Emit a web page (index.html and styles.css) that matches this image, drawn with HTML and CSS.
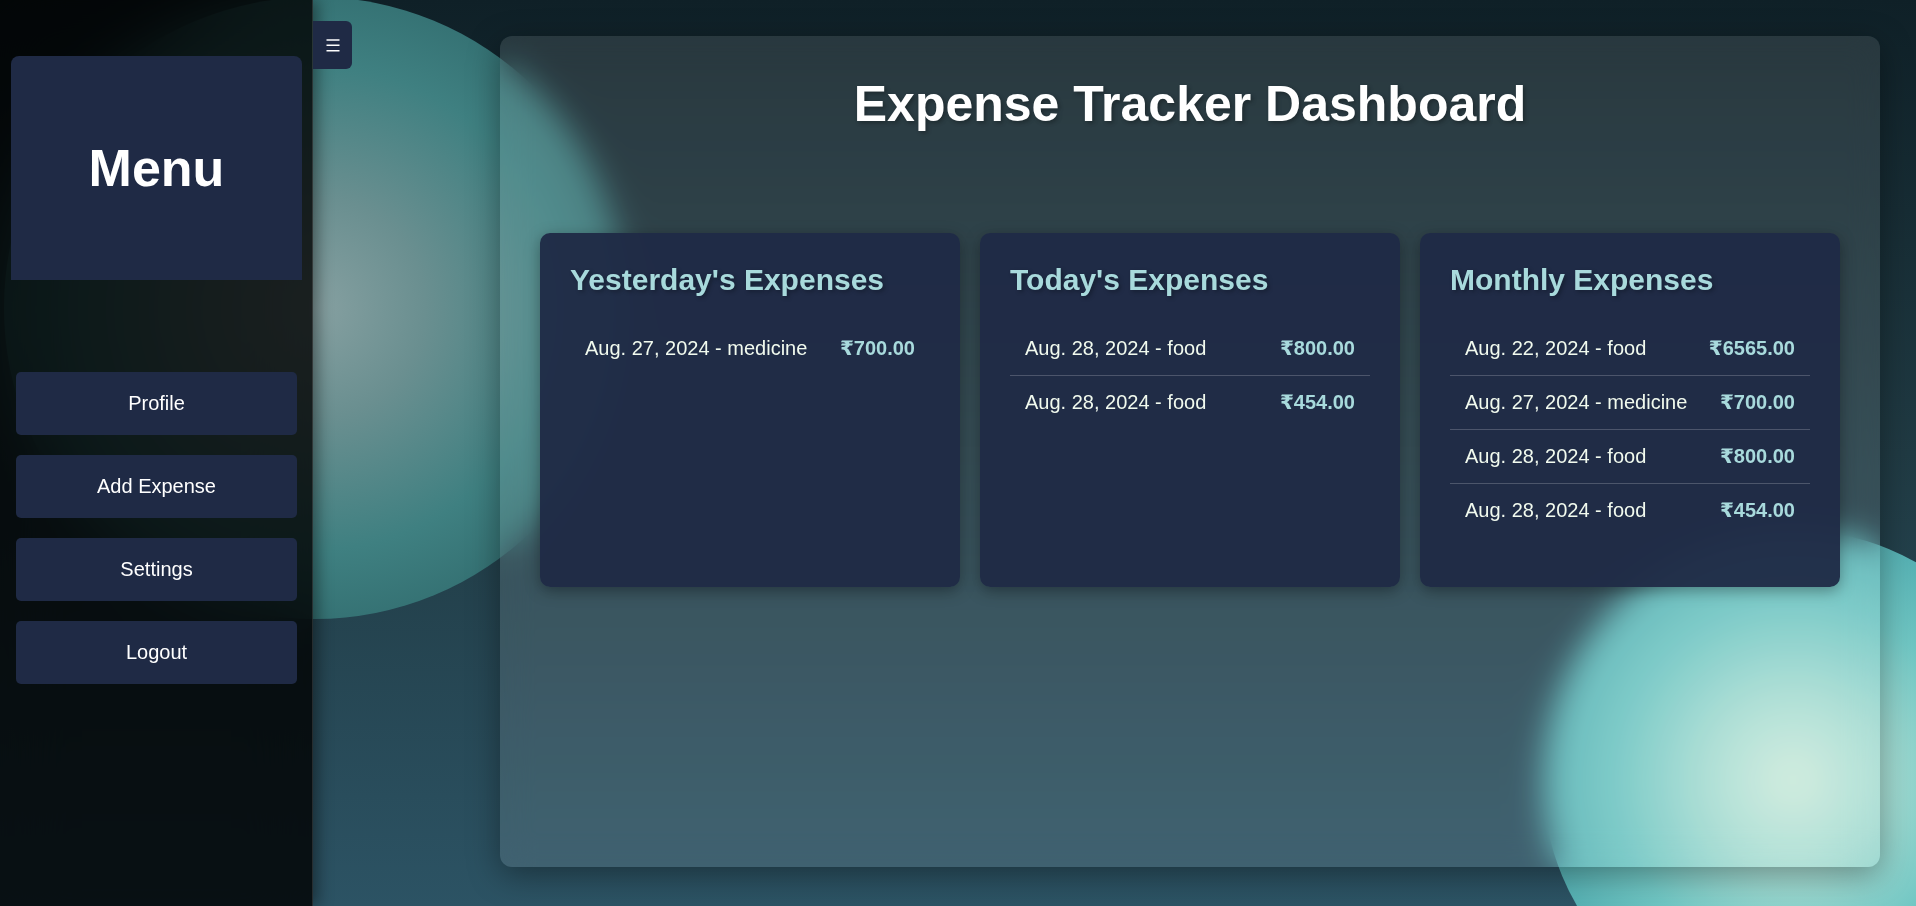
FILE: index.html
```html
<!DOCTYPE html>
<html lang="en">
<head>
<meta charset="utf-8">
<title>Expense Tracker Dashboard</title>
<link rel="stylesheet" href="styles.css">
</head>
<body>
<div class="backdrop">
  <div class="bg-circle circle-one"></div>
  <div class="bg-circle circle-two"></div>
</div>
<div class="layout">
  <aside class="sidebar">
    <div class="sidebar-header"><h2>Menu</h2></div>
    <nav class="sidebar-nav">
      <a class="nav-btn" href="#">Profile</a>
      <a class="nav-btn" href="#">Add Expense</a>
      <a class="nav-btn" href="#">Settings</a>
      <a class="nav-btn" href="#">Logout</a>
    </nav>
    <button class="toggle-btn" type="button" aria-label="Toggle menu">
      <svg width="14" height="14" viewBox="0 0 14 14" aria-hidden="true">
        <path d="M0.5 2H13.5M0.5 7.3H13.5M0.5 12.8H13.5" stroke="#ffffff" stroke-width="1.4" fill="none"/>
      </svg>
    </button>
  </aside>
  <main class="main">
    <section class="panel">
      <h1 class="title">Expense Tracker Dashboard</h1>
      <div class="cards">
        <div class="card">
          <h3>Yesterday's Expenses</h3>
          <ul class="expense-list">
            <li><span>Aug. 27, 2024 - medicine</span><span class="amount">₹700.00</span></li>
          </ul>
        </div>
        <div class="card">
          <h3>Today's Expenses</h3>
          <ul class="expense-list">
            <li><span>Aug. 28, 2024 - food</span><span class="amount">₹800.00</span></li>
            <li><span>Aug. 28, 2024 - food</span><span class="amount">₹454.00</span></li>
          </ul>
        </div>
        <div class="card">
          <h3>Monthly Expenses</h3>
          <ul class="expense-list">
            <li><span>Aug. 22, 2024 - food</span><span class="amount">₹6565.00</span></li>
            <li><span>Aug. 27, 2024 - medicine</span><span class="amount">₹700.00</span></li>
            <li><span>Aug. 28, 2024 - food</span><span class="amount">₹800.00</span></li>
            <li><span>Aug. 28, 2024 - food</span><span class="amount">₹454.00</span></li>
          </ul>
        </div>
      </div>
    </section>
  </main>
</div>
</body>
</html>
```

FILE: styles.css
```css
html, body {
  margin: 0;
  height: 100%;
}

body {
  position: relative;
  overflow: hidden;
  font-family: "Liberation Sans", Arial, "DejaVu Sans", sans-serif;
  color: #ffffff;
  background: linear-gradient(to bottom, #0f2027 0%, #203a43 50%, #2c5364 100%);
}

.backdrop {
  position: fixed;
  inset: 0;
  overflow: hidden;
  z-index: 0;
}

.bg-circle {
  position: absolute;
  border-radius: 50%;
}

.circle-one {
  left: 4px;
  top: -3px;
  width: 622px;
  height: 622px;
  background: radial-gradient(circle, #86a0a1 0%, #6a8f90 25%, #3f8081 55%, #336f71 75%, #2a5a5d 100%);
}

.circle-two {
  left: 1543px;
  top: 530px;
  width: 500px;
  height: 500px;
  background: radial-gradient(circle, #d0ecdd 0%, #a6dcd2 25%, #70c6c3 50%, #4eaaae 78%, #3b8189 100%);
}

.layout {
  position: relative;
  z-index: 1;
  display: flex;
  height: 100vh;
}

.sidebar {
  position: relative;
  flex: none;
  width: 313px;
  box-sizing: border-box;
  padding-top: 56px;
  background: rgba(0, 0, 0, 0.8);
  -webkit-backdrop-filter: blur(30px);
  backdrop-filter: blur(30px);
  border-right: 1px solid rgba(255, 255, 255, 0.12);
  box-shadow: 4px 0 15px rgba(0, 0, 0, 0.45);
}

.sidebar-header {
  margin: 0 10px 0 11px;
  height: 224px;
  display: flex;
  align-items: center;
  justify-content: center;
  background: #1f2a45;
  border-radius: 8px 8px 0 0;
}

.sidebar-header h2 {
  margin: 0;
  font-size: 52px;
  font-weight: 700;
  color: #ffffff;
}

.sidebar-nav {
  display: flex;
  flex-direction: column;
  gap: 20px;
  margin: 92px 15px 0 16px;
}

.nav-btn {
  height: 63px;
  display: flex;
  align-items: center;
  justify-content: center;
  background: #1f2a45;
  border-radius: 5px;
  font-size: 20px;
  color: #ffffff;
  text-decoration: none;
}

.toggle-btn {
  position: absolute;
  left: calc(100% + 1px);
  top: 21px;
  width: 39px;
  height: 48px;
  padding: 0;
  border: none;
  border-radius: 0 6px 6px 0;
  background: #1f2a45;
  display: flex;
  align-items: center;
  justify-content: center;
}

.toggle-btn svg {
  display: block;
}

.main {
  flex: 1;
  box-sizing: border-box;
  height: 100vh;
  padding: 36px 36px 39px 187px;
}

.panel {
  height: 100%;
  box-sizing: border-box;
  padding: 40px;
  background: rgba(255, 255, 255, 0.1);
  -webkit-backdrop-filter: blur(16px);
  backdrop-filter: blur(16px);
  border-radius: 12px;
  box-shadow: 0 8px 32px rgba(0, 0, 0, 0.37);
}

.title {
  margin: 0 0 100px;
  text-align: center;
  font-size: 50px;
  line-height: 57px;
  font-weight: 700;
  color: #ffffff;
  text-shadow: 2px 2px 4px rgba(0, 0, 0, 0.3);
}

.cards {
  display: grid;
  grid-template-columns: repeat(3, 1fr);
  gap: 20px;
}

.card {
  padding: 30px;
  background: rgba(31, 43, 70, 0.96);
  border-radius: 10px;
  box-shadow: 0 4px 15px rgba(0, 0, 0, 0.35);
}

.card h3 {
  margin: 0 0 25px;
  font-size: 30px;
  line-height: 34px;
  font-weight: 700;
  color: #a8dadc;
  text-shadow: 2px 2px 4px rgba(0, 0, 0, 0.3);
}

.expense-list {
  list-style: none;
  margin: 0 0 20px;
  padding: 0;
}

.expense-list li {
  display: flex;
  justify-content: space-between;
  align-items: baseline;
  padding: 15px;
  font-size: 20px;
  line-height: 23px;
  color: #f1faee;
  border-bottom: 1px solid rgba(255, 255, 255, 0.2);
}

.expense-list li:last-child {
  border-bottom: none;
}

.amount {
  font-weight: 700;
  color: #a8dadc;
}
```
